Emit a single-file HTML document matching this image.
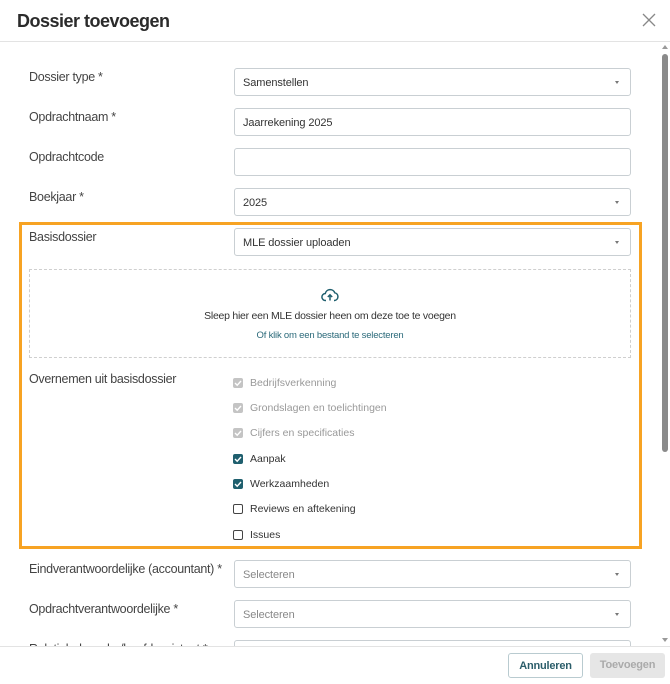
<!DOCTYPE html>
<html><head><style>
*{box-sizing:border-box;margin:0;padding:0}
body{width:670px;height:684px;background:#fff;font-family:"Liberation Sans",sans-serif;color:#333;position:relative;overflow:hidden}
.abs{position:absolute}
.title{left:17px;top:11px;font-size:18px;font-weight:bold;color:#2b2b2b;letter-spacing:-0.5px}
.close{left:641px;top:12px;width:16px;height:16px}
.hdr{left:0;top:41px;width:670px;height:1px;background:#e3e3e3}
.lbl{left:29px;font-size:12.5px;color:#444;letter-spacing:-0.3px}
.inp{left:234px;width:397px;height:28px;border:1px solid #c9cfd3;border-radius:3px;font-size:11px;color:#333;padding:8px 0 0 8px;letter-spacing:-0.1px}
.inp .car{position:absolute;right:11px;top:12px;width:0;height:0;border-left:2.5px solid transparent;border-right:2.5px solid transparent;border-top:3px solid #777}
.ph{color:#888}
.orange{left:19px;top:222px;width:623px;height:327px;border:3px solid #f7a323}
.drop{left:29px;top:269px;width:602px;height:89px;border:1px dashed #cfcfcf;text-align:center}
.cb{left:233px;width:10px;height:10px;border-radius:2px}
.cbl{left:250px;font-size:10.5px;color:#333}
.dis{background:#c4c4c4}
.on{background:#1f5f6e}
.off{border:1.3px solid #444;background:#fff}
.scroll{left:660px;top:42px;width:10px;height:604px;background:#fff}
.foot{left:0;top:646px;width:670px;height:38px;border-top:1px solid #e3e3e3;background:#fff}
.btn{top:653px;height:25px;font-size:11px;font-weight:bold;text-align:center;padding-top:6px;border-radius:3px;letter-spacing:-0.2px}
</style></head><body>
<div class="abs title">Dossier toevoegen</div>
<svg class="abs close" viewBox="0 0 16 16"><path d="M2 2L14 14M14 2L2 14" stroke="#888" stroke-width="1.3"/></svg>
<div class="abs hdr"></div>

<div class="abs lbl" style="top:70px">Dossier type *</div>
<div class="abs inp" style="top:68px">Samenstellen<span class="car"></span></div>
<div class="abs lbl" style="top:110px">Opdrachtnaam *</div>
<div class="abs inp" style="top:108px">Jaarrekening 2025</div>
<div class="abs lbl" style="top:150px">Opdrachtcode</div>
<div class="abs inp" style="top:148px"></div>
<div class="abs lbl" style="top:190px">Boekjaar *</div>
<div class="abs inp" style="top:188px">2025<span class="car"></span></div>

<div class="abs orange"></div>
<div class="abs lbl" style="top:230px">Basisdossier</div>
<div class="abs inp" style="top:228px">MLE dossier uploaden<span class="car"></span></div>
<div class="abs drop">
<svg style="position:absolute;left:291px;top:18px" width="18" height="14" viewBox="0 0 18 14"><path d="M5 12.5H4.5A3.5 3.5 0 0 1 4.3 5.5 5 5 0 0 1 13.8 4.8 3.9 3.9 0 0 1 13.5 12.5H13" fill="none" stroke="#1f5f6e" stroke-width="1.5"/><path d="M9 12.5V7M6.8 9L9 6.8 11.2 9" fill="none" stroke="#1f5f6e" stroke-width="1.5"/></svg>
<div style="position:absolute;left:0;width:100%;top:40px;font-size:10.5px;color:#333;letter-spacing:-0.25px">Sleep hier een MLE dossier heen om deze toe te voegen</div>
<div style="position:absolute;left:0;width:100%;top:60px;font-size:9.5px;color:#2b6a7a;letter-spacing:-0.2px">Of klik om een bestand te selecteren</div>
</div>
<div class="abs lbl" style="top:372px">Overnemen uit basisdossier</div>

<div class="abs cb dis" style="top:378px"></div><div class="abs cbl" style="top:377px;color:#999">Bedrijfsverkenning</div>
<div class="abs cb dis" style="top:403px"></div><div class="abs cbl" style="top:402px;color:#999">Grondslagen en toelichtingen</div>
<div class="abs cb dis" style="top:428px"></div><div class="abs cbl" style="top:427px;color:#999">Cijfers en specificaties</div>
<div class="abs cb on" style="top:454px"></div><div class="abs cbl" style="top:453px">Aanpak</div>
<div class="abs cb on" style="top:479px"></div><div class="abs cbl" style="top:478px">Werkzaamheden</div>
<div class="abs cb off" style="top:504px"></div><div class="abs cbl" style="top:503px">Reviews en aftekening</div>
<div class="abs cb off" style="top:530px"></div><div class="abs cbl" style="top:529px">Issues</div>
<svg class="abs" style="left:233px;top:378px" width="10" height="170"><g fill="none" stroke="#fff" stroke-width="1.4"><path d="M2 5L4.2 7.2 8 3"/><path d="M2 30L4.2 32.2 8 28"/><path d="M2 55L4.2 57.2 8 53"/><path d="M2 81L4.2 83.2 8 79"/><path d="M2 106L4.2 108.2 8 104"/></g></svg>

<div class="abs lbl" style="top:562px">Eindverantwoordelijke (accountant) *</div>
<div class="abs inp ph" style="top:560px">Selecteren<span class="car"></span></div>
<div class="abs lbl" style="top:602px">Opdrachtverantwoordelijke *</div>
<div class="abs inp ph" style="top:600px">Selecteren<span class="car"></span></div>
<div class="abs lbl" style="top:642px">Relatiebeheerder/hoofdassistent *</div>
<div class="abs inp" style="top:640px"></div>

<div class="abs scroll"><div style="position:absolute;left:2px;top:12px;width:6px;height:398px;background:#8a8a8a;border-radius:3px"></div>
<div style="position:absolute;left:2px;top:3px;border-left:3px solid transparent;border-right:3px solid transparent;border-bottom:4px solid #999"></div>
<div style="position:absolute;left:2px;top:596px;border-left:3px solid transparent;border-right:3px solid transparent;border-top:4px solid #999"></div></div>
<div class="abs foot"></div>
<div class="abs btn" style="left:508px;width:75px;border:1px solid #b9cbd0;color:#2b5d6a">Annuleren</div>
<div class="abs btn" style="left:590px;width:75px;background:#e6e6e6;color:#aaa">Toevoegen</div>
</body></html>
